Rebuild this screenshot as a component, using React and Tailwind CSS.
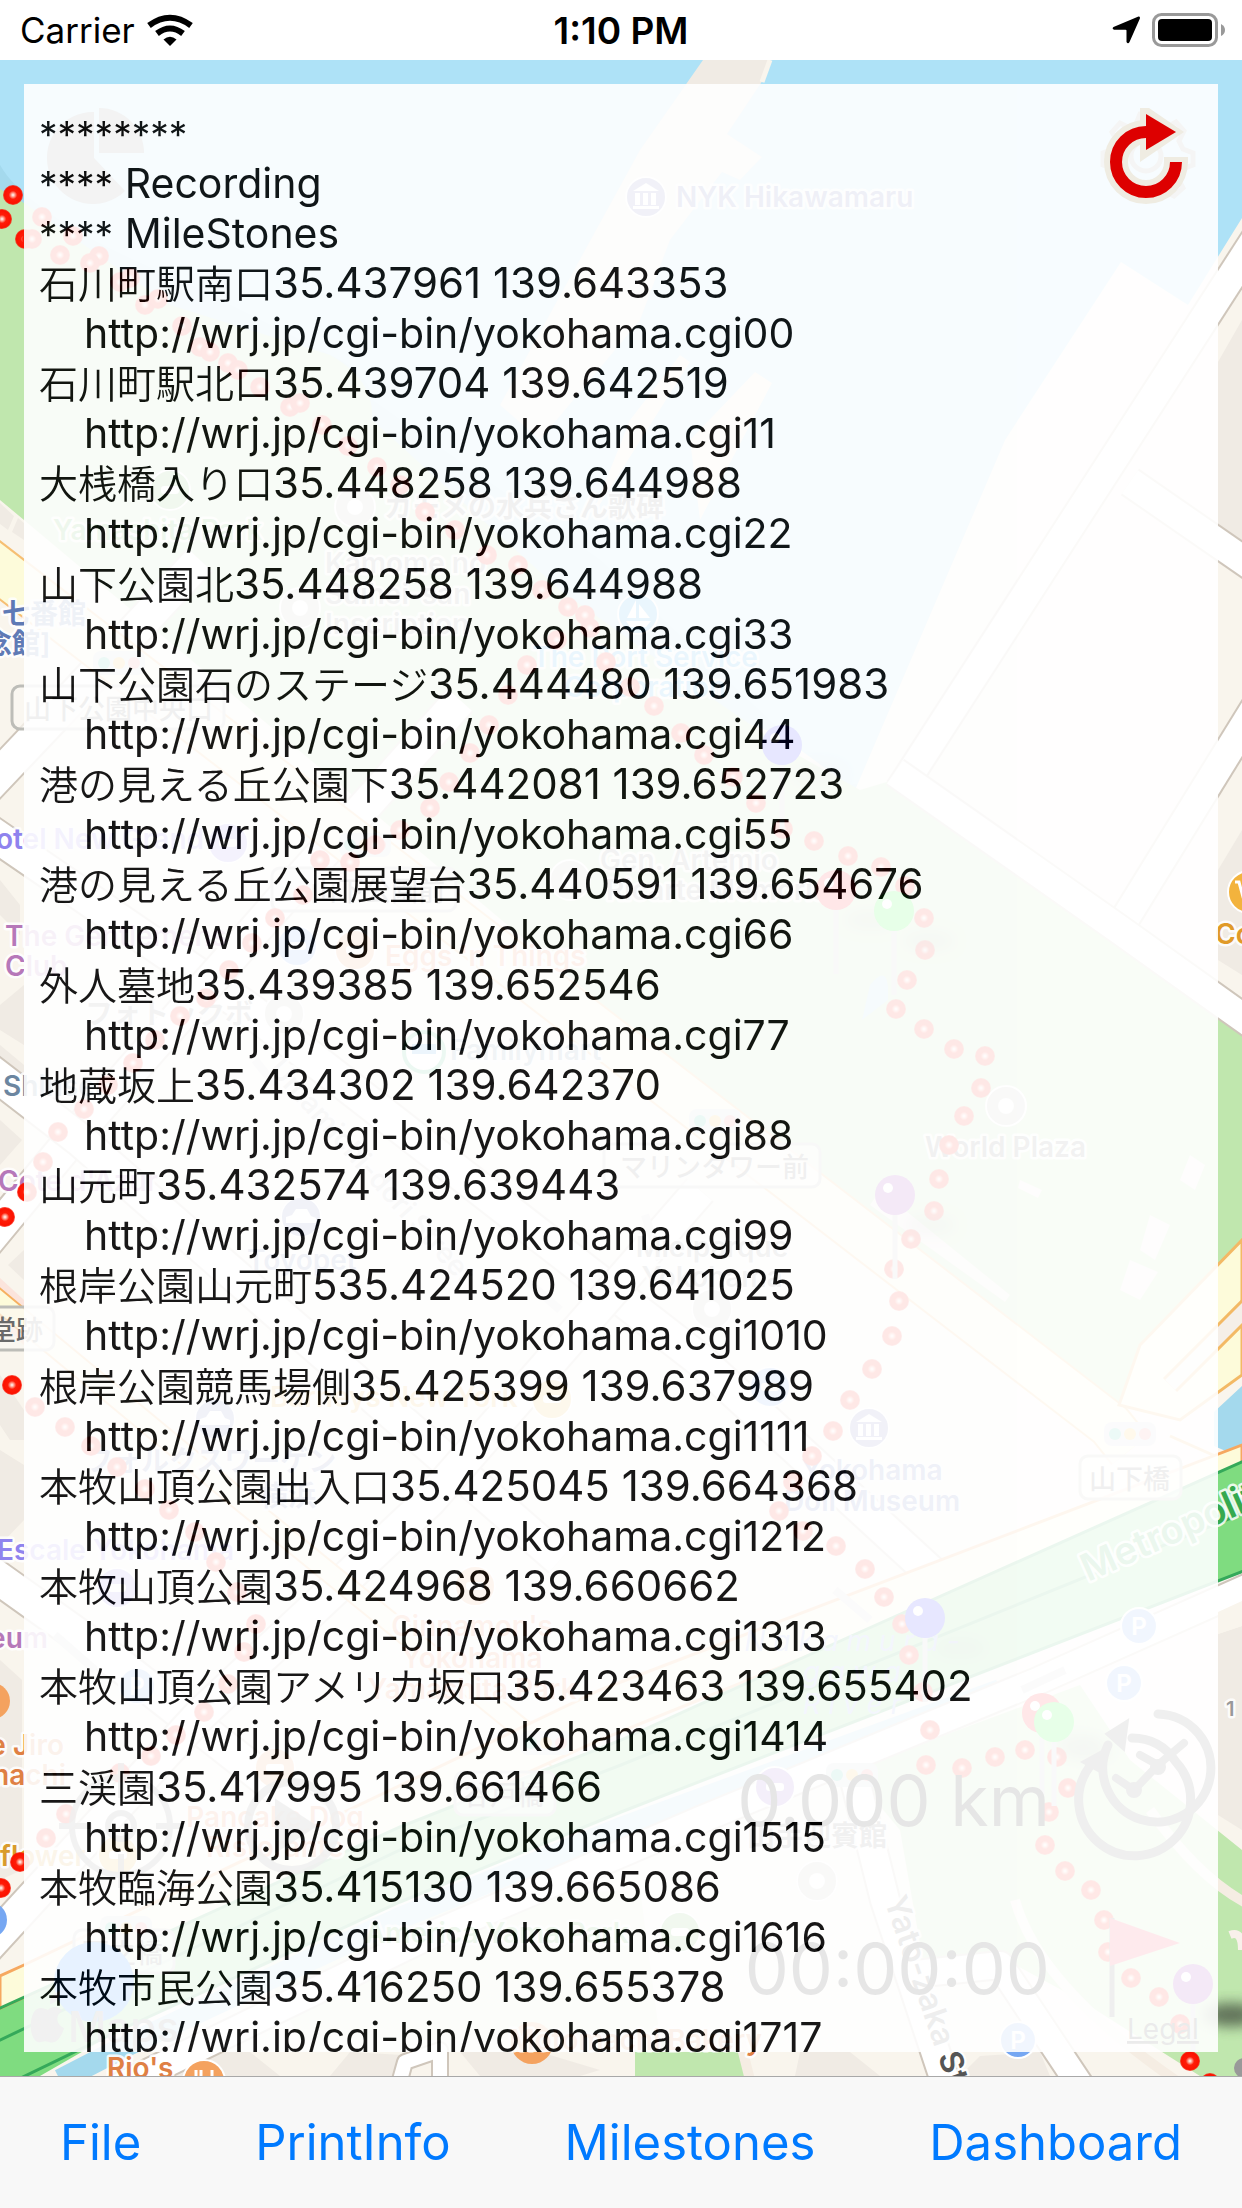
import React from "react";

const FONT = "font-['Inter','Noto_Sans_CJK_JP',sans-serif]";

const milestones = [
  ["石川町駅南口", "35.437961 139.643353", "00"],
  ["石川町駅北口", "35.439704 139.642519", "11"],
  ["大桟橋入り口", "35.448258 139.644988", "22"],
  ["山下公園北", "35.448258 139.644988", "33"],
  ["山下公園石のステージ", "35.444480 139.651983", "44"],
  ["港の見える丘公園下", "35.442081 139.652723", "55"],
  ["港の見える丘公園展望台", "35.440591 139.654676", "66"],
  ["外人墓地", "35.439385 139.652546", "77"],
  ["地蔵坂上", "35.434302 139.642370", "88"],
  ["山元町", "35.432574 139.639443", "99"],
  ["根岸公園山元町", "535.424520 139.641025", "1010"],
  ["根岸公園競馬場側", "35.425399 139.637989", "1111"],
  ["本牧山頂公園出入口", "35.425045 139.664368", "1212"],
  ["本牧山頂公園", "35.424968 139.660662", "1313"],
  ["本牧山頂公園アメリカ坂口", "35.423463 139.655402", "1414"],
  ["三渓園", "35.417995 139.661466", "1515"],
  ["本牧臨海公園", "35.415130 139.665086", "1616"],
  ["本牧市民公園", "35.416250 139.655378", "1717"],
];

const routeDots = [
  [13, 195], [2, 219], [25, 239], [42, 217], [32, 239], [73, 236], [60, 255], [99, 256], [90, 263], [120, 282],
  [130, 278], [145, 305], [158, 299], [182, 326], [200, 347], [210, 352], [228, 363], [238, 370], [260, 387],
  [290, 407], [300, 403], [322, 425], [348, 446], [377, 467], [400, 485], [425, 512], [455, 530], [487, 555],
  [518, 565], [542, 590], [568, 607], [585, 615], [590, 628], [557, 640], [527, 665], [508, 695], [489, 725],
  [470, 753], [449, 782], [430, 808], [400, 830], [375, 845], [350, 862], [320, 860], [303, 895], [275, 918],
  [252, 943], [229, 970], [206, 998], [180, 1016], [155, 1040], [133, 1063], [108, 1085], [84, 1109], [58, 1132],
  [43, 1162], [27, 1192], [5, 1217], [12, 1385], [35, 1407], [65, 1427], [91, 1446], [117, 1467], [145, 1489],
  [169, 1510], [195, 1532], [216, 1562], [237, 1592], [256, 1624], [244, 1652], [228, 1684], [204, 1712],
  [176, 1735], [151, 1756], [120, 1773], [66, 1814], [46, 1838], [20, 1862], [1, 1888], [606, 662], [630, 687],
  [654, 706], [681, 733], [704, 755], [733, 777], [756, 803], [783, 829], [814, 841], [848, 856], [881, 867],
  [905, 886], [924, 918], [925, 950], [907, 980], [896, 1009], [924, 1029], [954, 1049], [985, 1056], [981, 1088],
  [964, 1116], [949, 1145], [939, 1179], [934, 1211], [911, 1239], [894, 1269], [899, 1301], [892, 1336],
  [872, 1369], [850, 1400], [833, 1431], [812, 1456], [793, 1482], [779, 1511], [803, 1531], [836, 1546],
  [865, 1569], [884, 1597], [902, 1624], [909, 1655], [923, 1692], [930, 1730], [926, 1765], [962, 1768],
  [995, 1757], [1025, 1750], [1057, 1757], [1068, 1788], [1049, 1812], [1045, 1845], [1065, 1871], [1091, 1890],
  [1104, 1920], [1108, 1952], [1131, 1978], [1159, 1997], [1180, 2024], [1190, 2061], [1210, 2083],
];

const pins = [
  [782, 745, "#0a0aff"], [836, 890, "#ff0a14"], [894, 911, "#0aff14"], [895, 1195, "#9020b0"],
  [925, 1618, "#0a0aff"], [1042, 1713, "#ff0a14"], [1054, 1722, "#0aff14"], [1193, 1984, "#9020b0"],
];

const labels = [
  [676, 207, "NYK Hikawamaru", "#6068b0", "start"],
  [53, 540, "Yamashita Park", "#58b048", "start"],
  [384, 517, "カモメの水兵さん歌碑", "#777777", "start"],
  [325, 573, "Kamome no", "#888888", "start"],
  [325, 604, "Suihei-san", "#888888", "start"],
  [325, 634, "Inscription", "#888888", "start"],
  [645, 667, "The Port Service", "#30a8f0", "middle"],
  [645, 697, "Corporation", "#30a8f0", "middle"],
  [2, 624, "七番館", "#5f7ab5", "start"],
  [-16, 654, "念館]", "#5f7ab5", "start"],
  [204, 849, "Hotel New Grand", "#8f83ee", "end"],
  [600, 870, "Gen. Artemio", "#888888", "start"],
  [606, 900, "Ricarte Memorial", "#888888", "start"],
  [5, 946, "The Gentlemens", "#b678b9", "start"],
  [5, 976, "Club", "#b678b9", "start"],
  [385, 966, "Eggs 'n Things", "#f08050", "start"],
  [1215, 944, "Costco", "#e09a28", "start"],
  [85, 1024, "フォトックボ", "#888888", "start"],
  [3, 1096, "Shinsen", "#6c86a0", "start"],
  [450, 1060, "Familymart", "#7090a8", "start"],
  [925, 1157, "World Plaza", "#777777", "start"],
  [-2, 1191, "Cote d'Azur", "#b678b9", "start"],
  [247, 1270, "Toyopet", "#6c7bb0", "start"],
  [712, 1257, "Mielparque", "#888888", "middle"],
  [712, 1287, "Yokohama", "#888888", "middle"],
  [270, 1407, "Barneys New York", "#f0b040", "start"],
  [85, 1471, "フォルクスワーゲン", "#7080b0", "start"],
  [260, 1506, "横浜", "#7080b0", "start"],
  [872, 1480, "Yokohama", "#6070b8", "middle"],
  [872, 1511, "Doll Museum", "#6070b8", "middle"],
  [-3, 1560, "Escale Yokohama", "#8f83ee", "start"],
  [48, 1648, "Museum", "#b678b9", "end"],
  [64, 1755, "Cafe Jiro", "#df8044", "end"],
  [66, 1785, "Motomachi", "#df8044", "end"],
  [0, 1866, "flower", "#d99c2c", "start"],
  [472, 1636, "Cinnamon's", "#f08050", "middle"],
  [472, 1668, "Yokohama", "#f08050", "middle"],
  [472, 1699, "Yamashita Park", "#f08050", "middle"],
  [275, 1827, "Pancake Dog", "#f08050", "middle"],
  [275, 1857, "Ristorante", "#f08050", "middle"],
  [365, 1943, "America Yama Park", "#58b048", "start"],
  [747, 1846, "山手迎賓館", "#777777", "start"],
  [107, 2078, "Rio's", "#df8044", "start"],
  [762, 2050, "Motomachi Bakery", "#df8044", "end"],
];

const stations = [
  [12, 686, 212, "山下公園中央口"], [272, 868, 184, "山下公園前"], [-100, 1307, 154, "公会堂跡"],
  [604, 1144, 216, "マリンタワー前"], [1080, 1456, 101, "山下橋"], [455, 1772, 100, "谷戸橋"], [74, 1930, 100, "西之橋"],
];

const signals = [[119, 663], [365, 845], [715, 1121], [1130, 1434], [546, 1743], [126, 1928], [852, 1775]];

const places = [
  [646, 197, "#7078b8"], [170, 490, "#70b860"], [355, 507, "#c4c4bc"], [300, 608, "#c4c4bc"], [638, 614, "#30a8f0"],
  [228, 843, "#8f83ee"], [570, 880, "#c4c4bc"], [297, 946, "#78aaf8"], [355, 950, "#f4a060"], [284, 1014, "#c4c4bc"],
  [1006, 1106, "#c4c4bc"], [301, 1217, "#7080c0"], [712, 1309, "#c4c4bc"], [770, 1387, "#78aaf8"], [552, 1399, "#f0b840"],
  [215, 1419, "#7080c0"], [869, 1428, "#7078b8"], [117, 1588, "#8f83ee"], [475, 1586, "#f4a060"], [275, 1768, "#f4a060"],
  [775, 1787, "#8f60d0"], [817, 1881, "#c4c4bc"], [680, 1932, "#70b860"], [118, 1855, "#f0b840"],
];

const parking = [[1139, 1626], [1124, 1683], [1018, 2040], [137, 1686]];

function Road({ d, width = 32, fill = "#ffffff", edge = "#cfc6bb" }) {
  return (
    <g fill="none" strokeLinejoin="round">
      <path d={d} stroke={edge} strokeWidth={width + 4} />
      <path d={d} stroke={fill} strokeWidth={width} />
    </g>
  );
}

function MapView() {
  return (
    <svg
      className="absolute inset-0 h-full w-full"
      viewBox="0 60 1242 2016"
      preserveAspectRatio="xMidYMin slice"
      aria-hidden="true"
    >
      <defs>
        <radialGradient id="dot">
          <stop offset="0" stopColor="#ffffff" />
          <stop offset="0.18" stopColor="#ffa898" />
          <stop offset="0.42" stopColor="#ff1c08" />
          <stop offset="0.85" stopColor="#fb1200" />
          <stop offset="1" stopColor="#fb1200" stopOpacity="0.7" />
        </radialGradient>
        <filter id="soft" x="-50%" y="-80%" width="200%" height="260%">
          <feGaussianBlur stdDeviation="7" />
        </filter>
      </defs>
      <rect x="0" y="60" width="1242" height="2016" fill="#aee2f7" />
      <path d="M0 165C20 200 80 240 180 280L340 360Q372 380 372 400L600 560L780 730L800 790L900 780L1242 1000V1500H0Z" fill="#a4d9ed" />

      {/* land */}
      <path d="M703 60H770L763 80L727 134L762 157L740 180L722 172L670 240L640 320L540 440L500 405L640 150Z" fill="#f0ebe4" />
      <path d="M770 60L762 82" stroke="#f9f5ed" strokeWidth="5" />
      <path d="M630 420L680 355L690 362L590 520ZM690 440L755 372L772 383L700 520Z" fill="#f9efe0" />
      <path d="M0 400L300 560L780 735L855 790L1005 440L1121 262L1188 305L1242 218V2076H0Z" fill="#f9f5ed" />
      <path d="M1242 320L1218 362V535L1242 552ZM1242 830L1218 870V960L1242 975Z" fill="#f0ebe4" />

      {/* parks */}
      <path d="M0 189L24 203L170 305L330 355Q375 380 372 420L560 590L700 690L780 745L860 790L900 778L1218 1010L1242 1028V1240L1140 1350L1119 1405L918 1262L621 1020L24 520L0 500Z" fill="#c0e7ae" />
      <path d="M850 1770L1080 1685L1130 1760L1242 1850V2076H1200L1080 2000L1010 1962L925 1972L900 1830Z" fill="#c0e7ae" />
      <path d="M635 2040H745L750 2076H635Z" fill="#c0e7ae" />
      <path d="M260 1960L420 1900L640 1890L660 2040H300Z" fill="#e1f0d0" />
      <g fill="#f0ebe4">
        <path d="M0 503L14 516L8 530L0 524ZM18 518L24 523V540L12 532Z" />
        <path d="M0 880L20 905V935L0 915ZM0 1005L24 985V1045L0 1030Z" />
        <path d="M0 1045L24 1065V1090L0 1075ZM0 1120L22 1140L0 1165ZM8 1265L24 1250V1280Z" />
        <path d="M0 1375L24 1410V1440H10L0 1425ZM0 1450L24 1465V1520L0 1545Z" />
        <path d="M0 1660L22 1680V1870L0 1880Z" />
        <path d="M1218 1634L1242 1626V1830L1218 1815Z" />
        <path d="M160 2076L200 2052H250L280 2076ZM350 2052L420 2056L400 2076H330ZM460 2052H540L600 2070L580 2076H480Z" />
        <path d="M800 2052H850L880 2076H795ZM980 2056L1040 2052L1050 2076H960Z" />
        <path d="M1190 1155L1205 1165L1195 1190L1180 1180ZM1150 1215L1170 1225L1155 1260L1140 1250ZM1130 1260L1158 1272L1140 1300L1120 1290ZM1020 1180L1042 1190L1038 1198L1018 1188ZM880 1190L1010 1295L1005 1302L870 1205Z" />
      </g>
      <path d="M0 1278L24 1300V1345L0 1322Z" fill="#fbe4dc" />
      <path d="M870 985Q890 960 888 1000L862 1020Z" fill="#a4d9ed" />

      {/* streets */}
      <Road d="M1260 232L900 790" width={28} />
      <Road d="M1130 482L1260 572" width={28} />
      <Road d="M1260 700L1115 935" width={28} />
      <Road d="M895 772L1120 930L1260 1030" width={28} />
      <Road d="M-20 795L70 700L200 560" />
      <Road d="M-20 825L250 1010L700 1360L950 1590" />
      <Road d="M-20 1250L75 1135L290 890L460 700" />
      <Road d="M-20 1063L80 1140L400 1420L560 1560" />
      <Road d="M-20 1565L120 1665L330 1830" />
      <Road d="M-20 1955L200 1715L430 1500L700 1190" />
      <Road d="M-20 555L1110 1425L1130 1450" width={44} fill="#fdfbda" edge="#f6bf73" />
      <Road d="M-20 1285L240 1500L560 1760" width={18} fill="#fdfbda" edge="#f6b060" />
      <path d="M1242 1240L1140 1345L1119 1405L1180 1420L1242 1375Z" fill="#fdfbda" stroke="#f3b965" strokeWidth="3" />
      <path d="M1170 1385L1250 1305" stroke="#f3b965" strokeWidth="20" />
      <path d="M1170 1385L1250 1305" stroke="#f5efe8" strokeWidth="14" />
      <path d="M1214 1412L1242 1386V1458L1214 1446Z" fill="#a4d9ed" />
      <path d="M1170 1436L1242 1468" stroke="#f3b965" strokeWidth="3" />
      <path d="M0 1976L24 1965L600 1690L1242 1445V1480L600 1740L0 2010Z" fill="#fdfbda" stroke="#f6a860" strokeWidth="3" />
      <path d="M0 2010L400 1827L621 1740L820 1650L1242 1462V1572L621 1812L400 1902L120 2030L40 2076H0Z" fill="#7fdc80" />
      <path d="M-4 2010L400 1827L621 1740L820 1650L1246 1460M-4 2042L400 1850L621 1765L1246 1512M-4 2090L120 2030L400 1902L621 1812L1246 1570" fill="none" stroke="#35a95a" strokeWidth="3" />
      <path d="M60 2080L130 2044L400 1918L621 1828L1000 1690" fill="none" stroke="#a4d9ed" strokeWidth="22" />
      <Road d="M100 2096L420 1940L700 1820L1040 1680L1260 1582" width={26} />
      <path d="M1218 1612L1242 1601V1626L1218 1634Z" fill="#f9f5ed" />
      <Road d="M855 1780L885 1900L950 2096" width={28} />
      <Road d="M400 2080L405 2062L440 2050L440 2090" width={14} />
      <Road d="M905 1975L1000 1965L1090 2100" width={26} />
      <path d="M1015 1900Q1040 1990 1190 2090M1150 1810Q1200 1880 1250 1905M740 2040L750 2080" fill="none" stroke="#f5ede3" strokeWidth="10" />
      <path d="M1230 1935Q1242 1930 1242 1950" fill="none" stroke="#f9f0ea" strokeWidth="8" />
      <g stroke="#d8d8d8" strokeWidth="8" fill="none">
        <path d="M255 1060L275 1085M515 1270L560 1310M660 1260L645 1215M55 1635L95 1670M1022 1690L1065 1670M835 1590L870 1620" />
      </g>

      {/* points of interest */}
      {places.map(([x, y, c]) => (
        <g key={`${x}-${y}`}>
          <circle cx={x} cy={y} r="20" fill={c} stroke="#fff" strokeWidth="2" />
          {c === "#c4c4bc" ? (
            <circle cx={x} cy={y} r="8" fill="#fff" />
          ) : c === "#7078b8" ? (
            <path d={`M${x - 13} ${y - 6}L${x} ${y - 14}L${x + 13} ${y - 6}ZM${x - 11} ${y - 4}h5v12h-5zM${x - 3} ${y - 4}h5v12h-5zM${x + 5} ${y - 4}h5v12h-5zM${x - 13} ${y + 9}h26v3h-26z`} fill="#fff" />
          ) : c === "#30a8f0" ? (
            <path d={`M${x - 2} ${y - 14}V${y + 4}H${x - 11}ZM${x + 1} ${y - 10}L${x + 12} ${y + 4}H${x + 1}ZM${x - 12} ${y + 7}H${x + 13}L${x + 8} ${y + 13}H${x - 8}Z`} fill="#fff" />
          ) : c === "#7080c0" ? (
            <path d={`M${x - 15} ${y + 6}V${y}L${x - 9} ${y - 2}L${x - 5} ${y - 8}H${x + 6}L${x + 10} ${y - 1}L${x + 15} ${y + 1}V${y + 6}Z`} fill="#fff" />
          ) : (
            <rect x={x - 9} y={y - 4} width="18" height="8" rx="3" fill="#fff" />
          )}
        </g>
      ))}
      <circle cx="424" cy="1052" r="20" fill="#fff" stroke="#40c080" strokeWidth="4" />
      <rect x="412" y="1044" width="24" height="10" fill="#40a0e8" />
      {parking.map(([x, y]) => (
        <g key={`${x}-${y}`}>
          <circle cx={x} cy={y} r="18" fill="#76a7f2" stroke="#fff" strokeWidth="2" />
          <text x={x} y={y + 9} textAnchor="middle" fontSize="24" fontWeight="600" fill="#fff">P</text>
        </g>
      ))}
      <circle cx="-8" cy="1701" r="18" fill="#f4a25f" />
      <circle cx="-11" cy="1920" r="18" fill="#76a7f2" />
      <circle cx="204" cy="2081" r="21" fill="#f4a25f" stroke="#fff" strokeWidth="2" />
      <path d="M196 2070V2082M201 2070V2082M212 2070V2082" stroke="#fff" strokeWidth="3" />
      <circle cx="532" cy="2043" r="21" fill="#f4a25f" />
      <circle cx="1249" cy="892" r="21" fill="#f3b33d" stroke="#fff" strokeWidth="2" />
      <path d="M1235 882H1239L1243 897H1250M1243 887H1252" fill="none" stroke="#fff" strokeWidth="3" />
      <circle cx="1244" cy="2068" r="10" fill="#999" />

      {stations.map(([x, y, w, name]) => (
        <g key={name}>
          <rect x={x} y={y} width={w} height="43" rx="8" fill="#fbf8f2" fillOpacity="0.7" stroke="#bdbdb8" strokeWidth="3" />
          <text x={x + w - 11} y={y + 33} textAnchor="end" fontSize="27" fontWeight="500" fill="#6a6a6a">{name}</text>
        </g>
      ))}
      {signals.map(([x, y]) => (
        <g key={`${x}-${y}`}>
          <rect x={x - 26} y={y - 12} width="52" height="24" rx="8" fill="#d2d8de" />
          <circle cx={x - 15} cy={y} r="6" fill="#40c8a8" />
          <circle cx={x} cy={y} r="6" fill="#f8c040" />
          <circle cx={x + 15} cy={y} r="6" fill="#f08080" />
        </g>
      ))}
      <g fontSize="28" fontWeight="600" stroke="#ffffff" strokeWidth="5" strokeLinejoin="round" strokeOpacity="0.85" paintOrder="stroke">
        {labels.map(([x, y, text, color, anchor]) => (
          <text key={`${x}-${y}`} x={x} y={y} fill={color} textAnchor={anchor}>{text}</text>
        ))}
        <text x="1226" y="1716" fontSize="20" fill="#999">1</text>
        <text transform="translate(1088 1582) rotate(-24)" fontSize="38" fill="#35a94f">Metropolitan</text>
        <text transform="translate(884 1900) rotate(71)" fontSize="32" fill="#555">Yato-zaka St</text>
        <text transform="translate(268 1070) rotate(48)" fill="#bbb">Umamichi-dori Street</text>
      </g>
      <g fontSize="28" fontStyle="italic" fill="#8fa8f0" textAnchor="middle">
        <text x="852" y="1651">N a k a m u r a -</text>
        <text x="852" y="1682">g a w a</text>
        <text x="852" y="1714">R i v e r</text>
      </g>

      {/* recorded track */}
      {routeDots.map(([x, y]) => (
        <circle key={`${x}-${y}`} cx={x} cy={y} r="10" fill="url(#dot)" />
      ))}
      <ellipse cx="1232" cy="2015" rx="28" ry="11" fill="#3a4a34" opacity="0.65" filter="url(#soft)" />
      {pins.map(([x, y, color]) => (
        <g key={`${x}-${y}`}>
          <ellipse cx={x + 35} cy={y + 30} rx="26" ry="10" fill="#444" opacity="0.25" filter="url(#soft)" />
          <path d={`M${x} ${y + 15}V${y + (y > 1960 ? 66 : 84)}`} stroke="#c4c4c8" strokeWidth="5" />
          <circle cx={x} cy={y} r="20" fill={color} />
          <circle cx={x - 7} cy={y - 7} r="5" fill="#fff" />
        </g>
      ))}

      {/* on-map controls */}
      <g fill="#858585">
        <path d="M94 158L125 191A46 46 0 1 1 94 112Z" />
        <path d="M99 153V108A45 45 0 0 1 144 153Z" />
      </g>
      <g fill="none" stroke="#9a9a9a" strokeWidth="5">
        <circle cx="1146" cy="156" r="15" />
        <path d="M1136 124l4-10h12l4 10l10 4l10-6l8 9l-5 10l4 8l10 4v12l-11 4l-4 9l5 10l-9 8l-10-5l-8 4M1130 128l-10-5l-8 9l5 9l-4 8l-10 4v12l11 4" />
      </g>
      <g fill="none" stroke="#666" strokeWidth="6" opacity="0.8">
        <circle cx="121" cy="1826" r="49" />
        <circle cx="121" cy="1826" r="13" />
        <path d="M121 1763V1798M121 1854V1888M59 1826H92M156 1826H184" />
        <circle cx="292" cy="1826" r="44" strokeWidth="8" />
        <path d="M278 1804V1848L312 1826Z" fill="#666" />
      </g>
      <g fill="none" stroke="#5c5c5c" strokeWidth="9" strokeLinecap="round">
        <path d="M1090 1766A56 56 0 1 0 1176 1762Q1160 1738 1132 1738" />
        <path d="M1108 1745A54 54 0 1 0 1158 1714" />
        <path d="M1116 1778L1134 1790L1158 1765L1184 1743M1158 1765L1140 1755" strokeWidth="8" />
        <path d="M1128 1720L1106 1734L1124 1750ZM1104 1750L1082 1762L1100 1772Z" fill="#5c5c5c" strokeWidth="2" />
        <circle cx="1134" cy="1790" r="5" fill="#5c5c5c" strokeWidth="6" />
        <circle cx="1158" cy="1767" r="5" fill="#5c5c5c" strokeWidth="6" />
      </g>
      <path d="M1112 1918V2017" stroke="#606060" strokeWidth="5" />
      <path d="M1110 1918L1180 1943L1110 1966Z" fill="#f4304c" />
      <g textAnchor="end" fontSize="70" fill="#000">
        <text x="1050" y="1826">0.000 km</text>
        <text x="1050" y="1994">00:00:00</text>
      </g>
      <text x="1127" y="2039" fontSize="28" fill="#333" textDecoration="underline">Legal</text>
      <circle cx="94" cy="1982" r="40" fill="#0a84ff" />
      <g fill="#707070">
        <path d="M50 2004C50 1997 54 1993 60 1991C60 1998 56 2003 50 2004ZM48 2010C53 2005 59 2007 62 2011C55 2015 56 2025 64 2028C62 2036 56 2045 49 2042C46 2041 44 2041 41 2042C32 2045 27 2024 34 2012C38 2006 44 2008 48 2010Z" />
        <text x="68" y="2042" fontSize="42" fontWeight="500">Maps</text>
      </g>
    </svg>
  );
}

function StatusBar() {
  return (
    <header className="grid h-[60px] shrink-0 grid-cols-3 items-center bg-white px-4 text-[35px] leading-none text-black">
      <div className="flex items-center gap-3 pl-1">
        <span>Carrier</span>
        <svg className="h-8 w-[46px]" viewBox="0 0 46 32" aria-label="Wi-Fi">
          <g fill="none" stroke="#000" strokeWidth="6">
            <path d="M2 11.500Q23-4 44 11.500" />
            <path d="M10 19.500Q23 9.500 36 19.500" />
          </g>
          <path d="M23 32L16.500 25.500Q23 20 29.500 25.500Z" />
        </svg>
      </div>
      <time className="text-center text-[37px] font-semibold">1:10 PM</time>
      <div className="flex items-center justify-end gap-3">
        <svg className="h-7 w-7" viewBox="0 0 28 28" aria-label="Location in use">
          <path d="M26.500 0.600Q28.500 0.500 27.800 2.800L17.500 26Q16 28.500 14.500 26V14.500Q14.500 13.800 13.500 13.800H2Q-0.500 12.500 1.500 11Z" />
        </svg>
        <svg className="h-[34px] w-[74px]" viewBox="0 0 74 34" aria-label="Battery full">
          <rect x="1.500" y="1.500" width="63" height="31" rx="8" fill="none" stroke="#999" strokeWidth="3" />
          <rect x="6" y="6" width="54" height="22" rx="4" />
          <path d="M69 11Q73 13 73 17Q73 21 69 23Z" fill="#999" />
        </svg>
      </div>
    </header>
  );
}

function RefreshButton() {
  return (
    <button type="button" aria-label="Refresh" className="absolute top-10 right-[52px] h-[110px] w-[90px]">
      <svg className="h-full w-full" viewBox="1100 100 90 110">
        <g fill="none" stroke="#efece2">
          <path d="M1176 157V162A30 30 0 1 1 1146 132" strokeWidth="24" />
          <path d="M1140 108H1149L1184 132L1140 162Z" fill="#efece2" stroke="none" />
        </g>
        <path d="M1176 162A30 30 0 1 1 1146 132" fill="none" stroke="#dd0000" strokeWidth="12" />
        <path d="M1146 114L1176 132L1146 150Z" fill="#dd0000" />
      </svg>
    </button>
  );
}

function Stars({ children }) {
  return <span className="text-[37px]">{children}</span>;
}

export default function App() {
  return (
    <div className={`flex h-screen flex-col overflow-hidden bg-white ${FONT}`}>
      <StatusBar />
      <main className="relative flex min-h-0 flex-1 flex-col p-6">
        <MapView />
        <section
          aria-label="Recording log"
          className="relative flex min-h-0 flex-1 flex-col overflow-hidden bg-white px-[15px] pt-6 text-[41px] leading-[50px] whitespace-nowrap text-black opacity-90"
        >
          <div className="shrink-0">
            <p className="h-[50px]"><Stars>********</Stars></p>
            <p className="h-[50px]"><Stars>****</Stars> Recording</p>
            <p className="h-[50px]"><Stars>****</Stars> MileStones</p>
          </div>
          <ul className="-mb-2.5 flex flex-1 flex-col justify-between">
            {milestones.map(([name, position, id]) => (
              <li key={id} className="shrink-0">
                <p className="flex h-[50px] items-baseline">
                  <span className="text-[39px] font-[350]">{name}</span>
                  <span className="text-[42px]">{position}</span>
                </p>
                <p className="pl-[45px]">http://wrj.jp/cgi-bin/yokohama.cgi{id}</p>
              </li>
            ))}
          </ul>
        </section>
        <RefreshButton />
      </main>
      <nav className="flex h-[132px] shrink-0 items-center justify-between border-t border-[#a8a8a8] bg-[#f8f8f8] px-[60px] text-[49px] text-[#007aff]">
        <button type="button">File</button>
        <button type="button">PrintInfo</button>
        <button type="button">Milestones</button>
        <button type="button">Dashboard</button>
      </nav>
    </div>
  );
}
